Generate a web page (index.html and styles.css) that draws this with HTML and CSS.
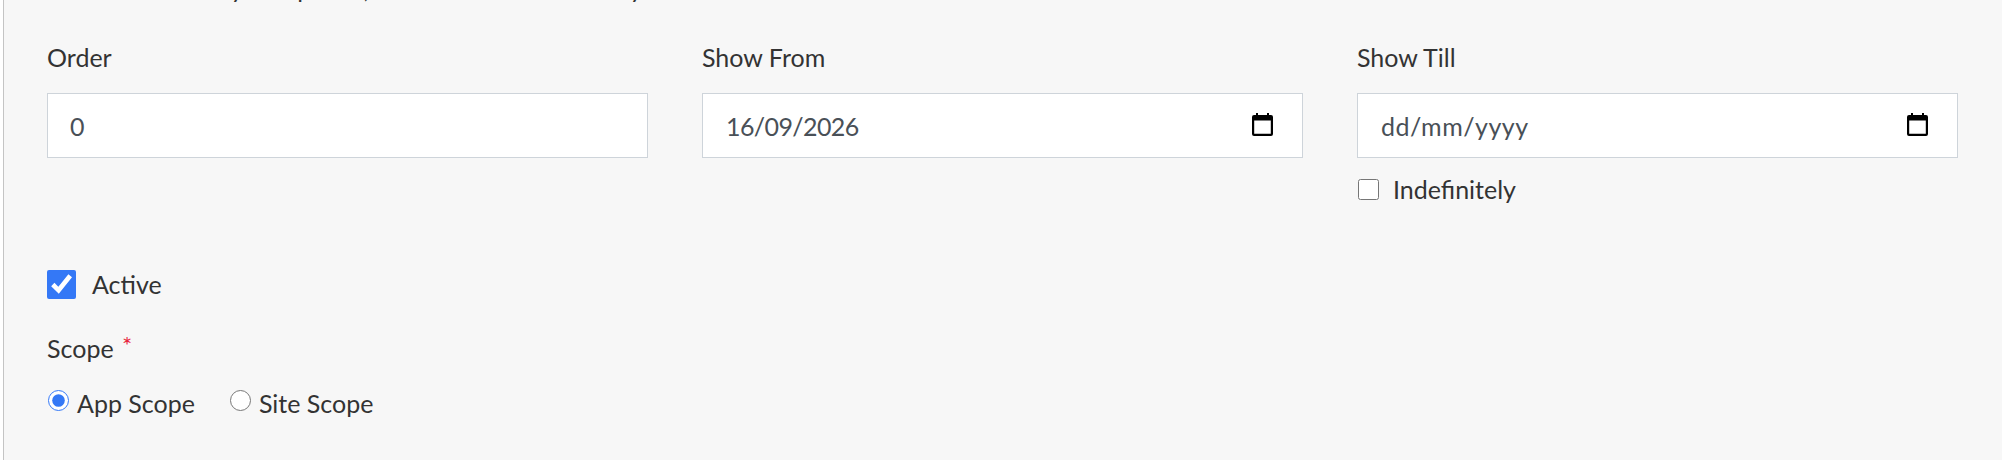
FILE: index.html
```html
<!DOCTYPE html>
<html lang="en-GB">
<head>
<meta charset="utf-8">
<title>Form</title>
<link rel="stylesheet" href="styles.css">
</head>
<body>
<form class="panel">
  <p class="clipped">This is shown only at 5 places, and it is listed on the day</p>
  <div class="dates">
    <div class="field">
      <label class="label">Order</label>
      <div class="input"><input class="value" type="text" value="0"></div>
    </div>
    <div class="field">
      <label class="label">Show From</label>
      <div class="input">
        <input class="value filled" type="text" value="16/09/2026">
        <svg class="cal" viewBox="0 0 21 23"><path fill-rule="evenodd" d="M4 0h2v2h9V0h2v2h2a2 2 0 0 1 2 2v17a2 2 0 0 1-2 2H2a2 2 0 0 1-2-2V4a2 2 0 0 1 2-2h2zM2.2 7.5v13.3h16.6V7.5z"/></svg>
      </div>
    </div>
    <div class="field">
      <label class="label">Show Till</label>
      <div class="input">
        <input class="value blank" type="text" value="dd/mm/yyyy">
        <svg class="cal" viewBox="0 0 21 23"><path fill-rule="evenodd" d="M4 0h2v2h9V0h2v2h2a2 2 0 0 1 2 2v17a2 2 0 0 1-2 2H2a2 2 0 0 1-2-2V4a2 2 0 0 1 2-2h2zM2.2 7.5v13.3h16.6V7.5z"/></svg>
      </div>
      <label class="indef"><input class="box" type="checkbox"><span>Indefinitely</span></label>
    </div>
  </div>
  <label class="active"><input class="check" type="checkbox" checked><span>Active</span></label>
  <div class="scope-label">Scope <span class="req">*</span></div>
  <div class="radios">
    <label class="radio-item"><input class="radio" type="radio" name="scope" checked><span>App Scope</span></label>
    <label class="radio-item"><input class="radio" type="radio" name="scope"><span>Site Scope</span></label>
  </div>
</form>
</body>
</html>
```
FILE: styles.css
```css
html, body { margin: 0; padding: 0; }
body { width: 2002px; height: 460px; overflow: hidden; background: #fff; font-family: Lato, sans-serif; color: #333; }
.panel { box-sizing: border-box; height: 460px; margin-left: 3px; padding: 0 0 0 43px; background: #f7f7f7; border-left: 1px solid #c4c4c4; overflow: hidden; font-size: 25px; }
.clipped { margin: -28px 0 0; height: 32px; line-height: 32px; letter-spacing: -0.3px; word-spacing: 0.4px; }
.dates { display: grid; grid-template-columns: repeat(3, 601px); column-gap: 54px; margin-top: 37px; height: 227px; }
.label { display: block; line-height: 32px; height: 32px; margin-bottom: 20px; }
.input { display: flex; align-items: center; box-sizing: border-box; height: 65px; background: #fff; border: 1px solid #ced4da; padding: 0 29px 0 22px; }
.value { flex: 1; min-width: 0; border: 0; padding: 0; margin: 0; background: transparent; color: #495057; font: inherit; outline: none; }
.filled { letter-spacing: -0.6px; margin-left: 1px; }
.blank { letter-spacing: 0.5px; margin-left: 1px; }
.cal { flex: none; width: 21px; height: 23px; margin-bottom: 2px; fill: #000; }
.indef { display: flex; align-items: center; gap: 14px; margin-top: 15px; line-height: 32px; }
.box { width: 21px; height: 21px; margin: 0 0 0 1px; }
.active { display: flex; align-items: center; gap: 16px; height: 32px; }
.check { width: 29px; height: 29px; margin: 0; accent-color: #3478f6; }
.scope-label { line-height: 32px; margin-top: 29px; }
.req { color: #e8263e; vertical-align: 4px; font-size: 24px; margin-left: 2px; }
.radios { display: flex; gap: 34px; margin-top: 23px; }
.radio-item { display: flex; align-items: center; gap: 8px; line-height: 32px; }
.radio { width: 21px; height: 21px; margin: -6px 0 0 1px; accent-color: #3478f6; }
```
